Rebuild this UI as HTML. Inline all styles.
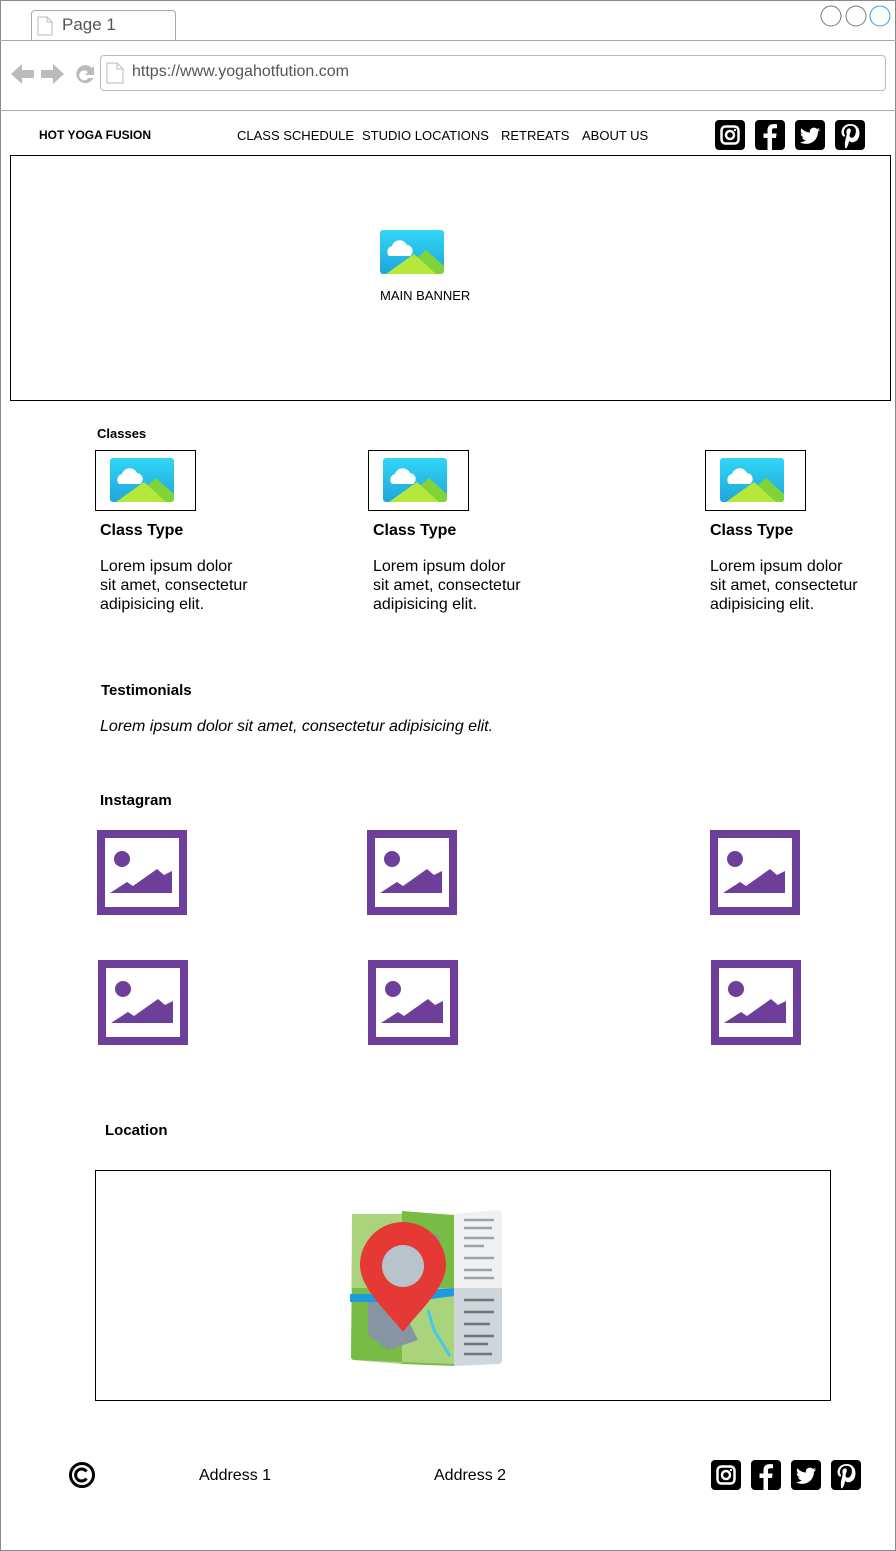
<!DOCTYPE html>
<html><head><meta charset="utf-8"><style>
*{margin:0;padding:0;box-sizing:border-box}
body{width:896px;height:1551px;position:relative;background:#fff;font-family:"Liberation Sans",Arial,sans-serif;color:#000;overflow:hidden}
.a{position:absolute}
.t{font-size:16px;line-height:19px}
.h{font-weight:bold;font-size:16px}
.nav{font-size:13px;top:128px;white-space:nowrap}
svg{position:absolute}
</style></head><body>
<div class="a" style="left:0;top:0;width:896px;height:1551px;border:1px solid #888"></div>
<!-- tab -->
<div class="a" style="left:31px;top:10px;width:145px;height:31px;border:1px solid #aaa;border-bottom:none;border-radius:4px 4px 0 0;background:#fff"></div>
<svg style="left:37px;top:16px" width="16" height="20"><path d="M1 1h9l5 5v13H1z" fill="#fff" stroke="#bbb"/><path d="M10 1v5h5" fill="none" stroke="#bbb"/></svg>
<div class="a" style="left:62px;top:15px;font-size:17px;color:#555">Page 1</div>
<div class="a" style="left:0;top:40px;width:896px;height:1px;background:#aaa"></div>
<svg style="left:818px;top:4px" width="76" height="24"><circle cx="13" cy="12" r="10" fill="#fff" stroke="#777"/><circle cx="38" cy="12" r="10" fill="#fff" stroke="#777"/><circle cx="62" cy="12" r="10" fill="#fff" stroke="#3a9ad9"/></svg>
<!-- nav arrows -->
<svg style="left:10px;top:60px" width="90" height="28"><path d="M1 14l11-10v6h12v8H12v6z" fill="#bbb"/><path d="M54 14L43 4v6H31v8h12v6z" fill="#bbb"/><path d="M82 8a9 9 0 1 0 1.5 10h-5a5 5 0 1 1-.5-6l-3 3h9V6z" fill="#bbb"/></svg>
<div class="a" style="left:100px;top:55px;width:786px;height:36px;border:1px solid #bbb;border-radius:4px"></div>
<svg style="left:106px;top:62px" width="18" height="22"><path d="M1 1h10l6 6v14H1z" fill="#fff" stroke="#bbb"/><path d="M11 1v6h6" fill="none" stroke="#bbb"/></svg>
<div class="a" style="left:132px;top:63px;font-size:16px;color:#555">https://www.yogahotfution.com</div>
<div class="a" style="left:0;top:110px;width:896px;height:1px;background:#aaa"></div>
<!-- header -->
<div class="a" style="left:39px;top:128px;font-size:12px;font-weight:bold">HOT YOGA FUSION</div>
<div class="a nav" style="left:237px">CLASS SCHEDULE</div>
<div class="a nav" style="left:362px">STUDIO LOCATIONS</div>
<div class="a nav" style="left:501px">RETREATS</div>
<div class="a nav" style="left:582px">ABOUT US</div>
<svg width="0" height="0" style="position:absolute">
<defs>
<g id="ig"><rect width="30" height="30" rx="4"/><rect x="6.5" y="6.5" width="17" height="17" rx="4" fill="none" stroke="#fff" stroke-width="2.5"/><circle cx="15" cy="15" r="4" fill="none" stroke="#fff" stroke-width="2.5"/><circle cx="20" cy="10" r="1.2" fill="#fff"/></g>
<g id="fb"><rect width="30" height="30" rx="4"/><path d="M17 30V18h4l.6-4.5H17v-3c0-1.3.4-2.2 2.2-2.2H22V4.3c-.5-.1-2-.2-3.6-.2-3.5 0-5.9 2.1-5.9 6v3.4H8.5V18h4v12z" fill="#fff"/></g>
<g id="tw"><rect width="30" height="30" rx="4"/><path d="M25 9.5c-.7.3-1.5.5-2.3.6.8-.5 1.5-1.3 1.8-2.2-.8.5-1.7.8-2.6 1-.7-.8-1.8-1.3-3-1.3-2.3 0-4.1 1.8-4.1 4.1 0 .3 0 .6.1.9-3.4-.2-6.4-1.8-8.5-4.3-.4.6-.6 1.3-.6 2.1 0 1.4.7 2.7 1.8 3.4-.7 0-1.3-.2-1.900-.5 0 2 1.4 3.7 3.3 4-.6.2-1.2.2-1.9.1.5 1.6 2 2.8 3.8 2.9-1.4 1.1-3.2 1.8-5.1 1.8H5c1.8 1.2 4 1.8 6.3 1.8 7.5 0 11.6-6.2 11.6-11.6v-.5c.8-.6 1.5-1.3 2.1-2.1z" fill="#fff"/></g>
<g id="pi"><rect width="30" height="30" rx="4"/><path d="M15.5 4C9.5 4 6.5 8.3 6.5 11.9c0 2.2.8 4.1 2.6 4.8.3.1.6 0 .6-.3l.3-1c.1-.3 0-.4-.2-.7-.5-.6-.9-1.5-.9-2.6 0-3.4 2.5-6.4 6.5-6.4 3.6 0 5.5 2.2 5.5 5 0 3.8-1.7 7-4.2 7-1.4 0-2.4-1.1-2.1-2.6.4-1.7 1.2-3.5 1.2-4.7 0-1.1-.6-2-1.8-2-1.4 0-2.6 1.5-2.6 3.5 0 1.3.4 2.1.4 2.1l-1.7 7.300c-.5 2.2-.1 4.8 0 6.9h1.2c.7-1.1 1.6-2.6 2-4l.9-3.5c.5.9 1.8 1.6 3.2 1.6 4.2 0 7.1-3.9 7.1-9C24.5 7.8 21 4 15.5 4z" fill="#fff"/></g>
<g id="pic"><rect x="0" y="0" width="64" height="44" rx="3" fill="url(#gb)"/><path d="M18 44L46 20 64 36V41a3 3 0 0 1-3 3z" fill="#7fd43a"/><path d="M6 44L34 24 56 44z" fill="#b5e83a"/><path d="M9 26a6 6 0 0 1 3-10 8 8 0 0 1 15-1 6 6 0 0 1 3 11z" fill="#fff"/></g>
<linearGradient id="gb" x1="0" y1="0" x2="0" y2="1"><stop offset="0" stop-color="#32d6f5"/><stop offset="1" stop-color="#1ea6dc"/></linearGradient>
<g id="pp"><rect x="4" y="4" width="82" height="77" fill="#fff" stroke="#6d3f9a" stroke-width="8"/><circle cx="25" cy="29" r="8" fill="#6d3f9a"/><path d="M13 63L30 52 36 56 60 39 67 45 75 41V63z" fill="#6d3f9a"/></g>
</defs></svg>
<svg style="left:715px;top:120px" width="150" height="30"><use href="#ig"/><use href="#fb" x="40"/><use href="#tw" x="80"/><use href="#pi" x="120"/></svg>
<!-- banner -->
<div class="a" style="left:10px;top:155px;width:881px;height:246px;border:1px solid #000"></div>
<svg style="left:380px;top:230px" width="64" height="44"><use href="#pic"/></svg>
<div class="a" style="left:380px;top:288px;font-size:13px">MAIN BANNER</div>
<!-- classes -->
<div class="a" style="left:97px;top:426px;font-size:13px;font-weight:bold">Classes</div>
<div class="a" style="left:95px;top:450px;width:101px;height:61px;border:1px solid #000"></div>
<svg style="left:110px;top:458px" width="64" height="44"><use href="#pic"/></svg>
<div class="a" style="left:368px;top:450px;width:101px;height:61px;border:1px solid #000"></div>
<svg style="left:383px;top:458px" width="64" height="44"><use href="#pic"/></svg>
<div class="a" style="left:705px;top:450px;width:101px;height:61px;border:1px solid #000"></div>
<svg style="left:720px;top:458px" width="64" height="44"><use href="#pic"/></svg>
<div class="a h" style="left:100px;top:522px">Class Type</div>
<div class="a h" style="left:373px;top:522px">Class Type</div>
<div class="a h" style="left:710px;top:522px">Class Type</div>
<div class="a t" style="left:100px;top:557px">Lorem ipsum dolor<br>sit amet, consectetur<br>adipisicing elit.</div>
<div class="a t" style="left:373px;top:557px">Lorem ipsum dolor<br>sit amet, consectetur<br>adipisicing elit.</div>
<div class="a t" style="left:710px;top:557px">Lorem ipsum dolor<br>sit amet, consectetur<br>adipisicing elit.</div>
<!-- testimonials -->
<div class="a h" style="left:101px;top:682px;font-size:15px">Testimonials</div>
<div class="a t" style="left:100px;top:717px;font-style:italic">Lorem ipsum dolor sit amet, consectetur adipisicing elit.</div>
<!-- instagram -->
<div class="a h" style="left:100px;top:792px;font-size:15px">Instagram</div>
<svg style="left:97px;top:830px" width="90" height="85"><use href="#pp"/></svg>
<svg style="left:367px;top:830px" width="90" height="85"><use href="#pp"/></svg>
<svg style="left:710px;top:830px" width="90" height="85"><use href="#pp"/></svg>
<svg style="left:98px;top:960px" width="90" height="85"><use href="#pp"/></svg>
<svg style="left:368px;top:960px" width="90" height="85"><use href="#pp"/></svg>
<svg style="left:711px;top:960px" width="90" height="85"><use href="#pp"/></svg>
<!-- location -->
<div class="a h" style="left:105px;top:1122px;font-size:15px">Location</div>
<div class="a" style="left:95px;top:1170px;width:736px;height:231px;border:1px solid #000"></div>
<svg style="left:348px;top:1210px" width="155" height="156" viewBox="0 0 155 156">
<path d="M4 4l50 0 0 150-48-4a3 3 0 0 1-3-3z" fill="#a9d47c"/>
<path d="M54 1l52 4v151l-52-2z" fill="#79bc45"/>
<path d="M106 4l44-4a4 4 0 0 1 4 4v146a4 4 0 0 1-4 4l-44 2z" fill="#eef0f2"/>
<path d="M106 78h48v72a4 4 0 0 1-4 4l-44 2z" fill="#cfd6dc"/>
<path d="M54 78h52v76l-52-2z" fill="#a9d47c"/>
<path d="M4 78h50v74L6 150a3 3 0 0 1-3-3z" fill="#79bc45"/>
<path d="M60 20l30 5 8 30-20 15-22-10z" fill="#8795a3"/>
<path d="M20 90l30 0 20 40-30 10-20-15z" fill="#8795a3"/>
<path d="M2 92h40l20 8 14-10 30-4v-8l-30 2-14 8-20-4H2z" fill="#1e9be0"/>
<path d="M80 100l6 20 16 26" fill="none" stroke="#46c9e8" stroke-width="3"/>
<g stroke="#9aa3ab" stroke-width="2.5"><path d="M116 10h30M116 18h28M116 28h30M116 36h20M116 48h30M116 60h28M116 68h30"/><path d="M116 90h30M116 102h30M116 114h26M116 126h30M116 134h24M116 144h28" stroke="#6d7680"/></g>
<path d="M55 122C38 100 12 78 12 55a43 43 0 0 1 86 0c0 23-26 45-43 67z" fill="#e53935"/>
<circle cx="55" cy="56" r="21" fill="#b9c3cb"/>
</svg>
<!-- footer -->
<svg style="left:68px;top:1461px" width="28" height="28"><circle cx="14" cy="14" r="11.5" fill="none" stroke="#000" stroke-width="3"/><path d="M18.5 10.5a6 6 0 1 0 0 7" fill="none" stroke="#000" stroke-width="3"/></svg>
<div class="a t" style="left:199px;top:1466px">Address 1</div>
<div class="a t" style="left:434px;top:1466px">Address 2</div>
<svg style="left:711px;top:1460px" width="150" height="30"><use href="#ig"/><use href="#fb" x="40"/><use href="#tw" x="80"/><use href="#pi" x="120"/></svg>
</body></html>
